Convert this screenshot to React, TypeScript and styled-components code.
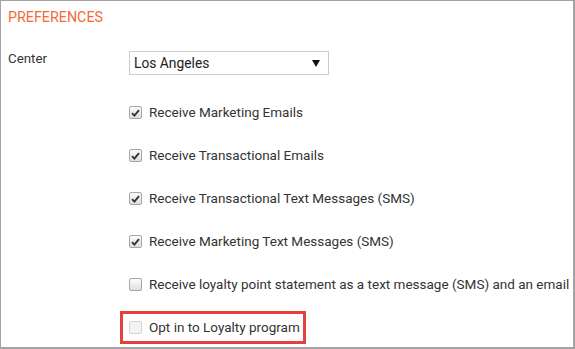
import React from 'react';
import styled, { createGlobalStyle } from 'styled-components';

const GlobalStyle = createGlobalStyle`
    html, body {
        margin: 0;
        padding: 0;
        background: #ffffff;
    }
    body {
        font-family: Roboto, "Liberation Sans", Arial, sans-serif;
    }
`;

const Panel = styled.div`
    box-sizing: border-box;
    width: 575px;
    height: 349px;
    border-top: 1px solid #a3a3a3;
    border-left: 1px solid #a3a3a3;
    border-right: 2px solid #a3a3a3;
    border-bottom: 2px solid #a3a3a3;
    padding: 6px 0 0 7px;
    overflow: hidden;
    color: #333333;
`;

const Title = styled.h2`
    margin: 0 0 24px 0;
    font-size: 14.3px;
    font-weight: 400;
    line-height: 20px;
    color: #f26b36;
    text-transform: uppercase;
`;

const FieldRow = styled.div`
    display: flex;
    align-items: flex-start;
`;

const FieldLabel = styled.label`
    width: 121px;
    font-size: 13.3px;
    line-height: 16px;
`;

const SelectBox = styled.div`
    box-sizing: border-box;
    display: flex;
    align-items: center;
    width: 200px;
    height: 24px;
    border: 1px solid #cccccc;
    padding: 0 8px 0 4px;
    background: #ffffff;
`;

const Select = styled.select`
    flex: 1;
    appearance: none;
    border: none;
    outline: none;
    background: transparent;
    padding: 0;
    font-family: inherit;
    font-size: 13.8px;
    color: #222222;
`;

const OptionList = styled.div`
    display: flex;
    flex-direction: column;
    margin: 16px 0 0 121px;
`;

const OptionRow = styled.div`
    display: flex;
    align-items: center;
    height: 43px;
`;

const OptionLabel = styled.label<{ highlighted?: boolean }>`
    box-sizing: border-box;
    display: inline-flex;
    align-items: center;
    gap: 7px;
    font-size: 13.5px;
    line-height: 15px;
    color: #333333;
    ${(p) =>
        p.highlighted &&
        `
        border: 3px solid #e4403e;
        padding: 6px 3px 6px 6px;
        margin-left: -9px;
    `}
`;

const Box = styled.span<{ disabled?: boolean }>`
    box-sizing: border-box;
    display: inline-flex;
    align-items: center;
    justify-content: center;
    width: 13px;
    height: 13px;
    border-radius: 2px;
    border: 1px solid ${(p) => (p.disabled ? '#d4d4d4' : '#a6a6a6')};
    background: ${(p) => (p.disabled ? '#f3f3f3' : 'linear-gradient(#fcfcfc, #dedede)')};
`;

interface ICheckProps {
    checked?: boolean;
    disabled?: boolean;
    label: string;
    highlighted?: boolean;
}

const Check = ({ checked, disabled, label, highlighted }: ICheckProps): JSX.Element => (
    <OptionRow>
        <OptionLabel highlighted={highlighted}>
            <Box disabled={disabled}>
                {checked && (
                    <svg width="9" height="8" viewBox="0 0 9 8">
                        <path d="M1 4.2 L3.4 6.6 L8 1.2" fill="none" stroke="#333" strokeWidth="1.9" />
                    </svg>
                )}
            </Box>
            <span>{label}</span>
        </OptionLabel>
    </OptionRow>
);

const options: ICheckProps[] = [
    { label: 'Receive Marketing Emails', checked: true },
    { label: 'Receive Transactional Emails', checked: true },
    { label: 'Receive Transactional Text Messages (SMS)', checked: true },
    { label: 'Receive Marketing Text Messages (SMS)', checked: true },
    { label: 'Receive loyalty point statement as a text message (SMS) and an email' },
    { label: 'Opt in to Loyalty program', disabled: true, highlighted: true },
];

const App = (): JSX.Element => {
    return (
        <>
            <GlobalStyle />
            <Panel>
                <Title>Preferences</Title>
                <FieldRow>
                    <FieldLabel>Center</FieldLabel>
                    <SelectBox>
                        <Select defaultValue="la">
                            <option value="la">Los Angeles</option>
                        </Select>
                        <svg width="8" height="7" viewBox="0 0 8 7">
                            <path d="M0 0 H8 L4 7 Z" fill="#111" />
                        </svg>
                    </SelectBox>
                </FieldRow>
                <OptionList>
                    {options.map((o) => (
                        <Check key={o.label} {...o} />
                    ))}
                </OptionList>
            </Panel>
        </>
    );
};

export default App;
